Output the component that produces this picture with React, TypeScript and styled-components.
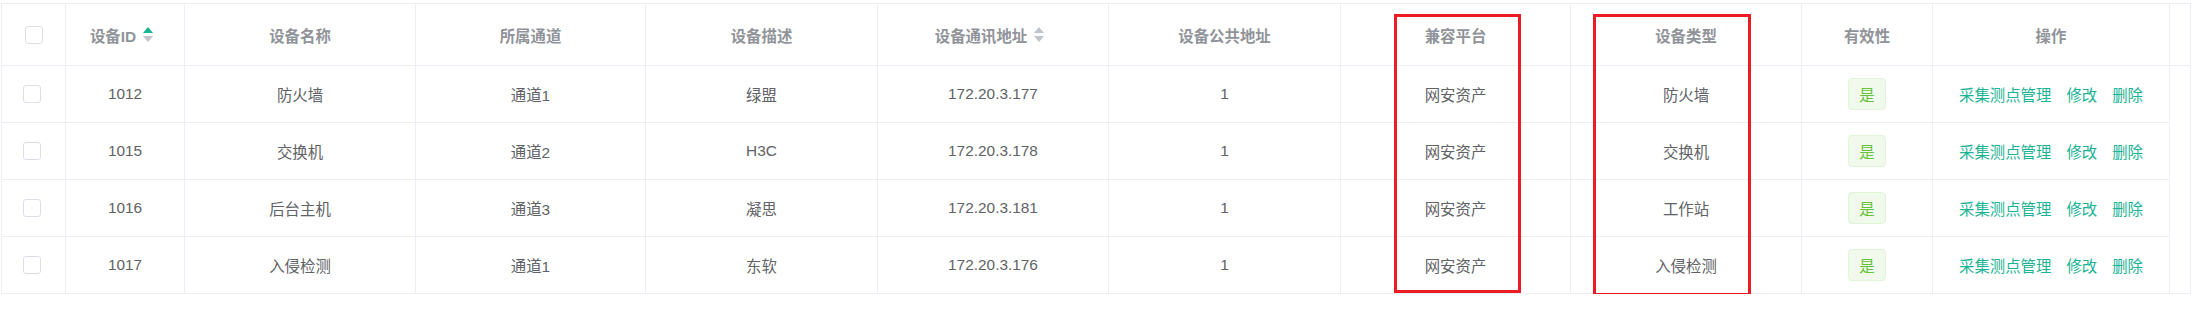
import React from "react";
import styled, { createGlobalStyle, css } from "styled-components";

const GlobalStyle = createGlobalStyle`
  html, body {
    margin: 0;
    padding: 0;
    background: #ffffff;
  }
  body {
    font-family: "Liberation Sans", "Noto Sans CJK SC", sans-serif;
  }
`;

const COLS = "64px 119px 231px 230px 232px 231px 232px 230px 231px 131px 237px 20px";
const BORDER = "#ebeef5";
const TEAL = "#1ab394";

const Page = styled.div`
  position: relative;
  padding: 3px 0 0 1px;
`;

const Table = styled.div`
  width: max-content;
  border-top: 1px solid ${BORDER};
  border-left: 1px solid ${BORDER};
  border-right: 1px solid ${BORDER};
  font-size: 15.4px;
`;

const Row = styled.div`
  display: grid;
  grid-template-columns: ${COLS};
`;

const Cell = styled.div<{ $head?: boolean; $gutter?: boolean; $last?: boolean; $nudge?: number }>`
  box-sizing: border-box;
  height: ${(p) => (p.$head ? "62px" : "57px")};
  display: flex;
  align-items: center;
  justify-content: center;
  white-space: nowrap;
  border-right: 1px solid ${BORDER};
  border-bottom: 1px solid ${BORDER};
  color: ${(p) => (p.$head ? "#909399" : "#606266")};
  font-weight: ${(p) => (p.$head ? 700 : 400)};
  padding-right: ${(p) => (p.$nudge ? `${p.$nudge}px` : "0")};
  ${(p) =>
    p.$gutter &&
    css`
      border-right: none;
      border-bottom: ${p.$head || p.$last ? `1px solid ${BORDER}` : "none"};
    `}
`;

const Checkbox = styled.span`
  box-sizing: border-box;
  display: inline-block;
  width: 18px;
  height: 18px;
  border: 1px solid #dcdfe6;
  border-radius: 3px;
  background: #fff;
`;

const SortCaret = styled.span`
  display: inline-flex;
  flex-direction: column;
  align-items: center;
  justify-content: center;
  gap: 3px;
  width: 24px;
  height: 30px;
`;

const Triangle = styled.span<{ $dir: "up" | "down"; $active?: boolean }>`
  width: 0;
  height: 0;
  border-left: 5.5px solid transparent;
  border-right: 5.5px solid transparent;
  ${(p) =>
    p.$dir === "up"
      ? css`
          border-bottom: 6px solid ${p.$active ? TEAL : "#c0c4cc"};
        `
      : css`
          border-top: 6px solid ${p.$active ? TEAL : "#c0c4cc"};
        `}
`;

const HeadLabel = styled.span`
  display: inline-flex;
  align-items: center;
`;

const Tag = styled.span`
  box-sizing: border-box;
  display: inline-flex;
  align-items: center;
  justify-content: center;
  height: 32px;
  padding: 0 10px;
  background: #f0f9eb;
  border: 1px solid #e1f3d8;
  border-radius: 4px;
  color: #67c23a;
  font-size: 15.4px;
`;

const Actions = styled.span`
  display: inline-flex;
  gap: 15px;
`;

const ActionLink = styled.a`
  color: ${TEAL};
  text-decoration: none;
  cursor: pointer;
`;

const Highlight = styled.div<{ $left: number; $top: number; $w: number; $h: number }>`
  position: absolute;
  box-sizing: border-box;
  left: ${(p) => p.$left}px;
  top: ${(p) => p.$top}px;
  width: ${(p) => p.$w}px;
  height: ${(p) => p.$h}px;
  border: 3px solid #ec1c24;
  pointer-events: none;
`;

type Device = {
  id: string;
  name: string;
  channel: string;
  desc: string;
  addr: string;
  pub: string;
  platform: string;
  type: string;
};

const devices: Device[] = [
  { id: "1012", name: "防火墙", channel: "通道1", desc: "绿盟", addr: "172.20.3.177", pub: "1", platform: "网安资产", type: "防火墙" },
  { id: "1015", name: "交换机", channel: "通道2", desc: "H3C", addr: "172.20.3.178", pub: "1", platform: "网安资产", type: "交换机" },
  { id: "1016", name: "后台主机", channel: "通道3", desc: "凝思", addr: "172.20.3.181", pub: "1", platform: "网安资产", type: "工作站" },
  { id: "1017", name: "入侵检测", channel: "通道1", desc: "东软", addr: "172.20.3.176", pub: "1", platform: "网安资产", type: "入侵检测" },
];

const Sortable: React.FC<{ label: string; active?: boolean }> = ({ label, active }) => (
  <HeadLabel>
    {label}
    <SortCaret>
      <Triangle $dir="up" $active={active} />
      <Triangle $dir="down" />
    </SortCaret>
  </HeadLabel>
);

export default function App() {
  return (
    <>
      <GlobalStyle />
      <Page>
        <Table>
          <Row>
            <Cell $head>
              <Checkbox />
            </Cell>
            <Cell $head>
              <Sortable label="设备ID" active />
            </Cell>
            <Cell $head>设备名称</Cell>
            <Cell $head>所属通道</Cell>
            <Cell $head>设备描述</Cell>
            <Cell $head>
              <Sortable label="设备通讯地址" />
            </Cell>
            <Cell $head>设备公共地址</Cell>
            <Cell $head>兼容平台</Cell>
            <Cell $head>设备类型</Cell>
            <Cell $head>有效性</Cell>
            <Cell $head>操作</Cell>
            <Cell $head $gutter />
          </Row>
          {devices.map((d, i) => {
            const last = i === devices.length - 1;
            return (
              <Row key={d.id}>
                <Cell $nudge={4}>
                  <Checkbox />
                </Cell>
                <Cell>{d.id}</Cell>
                <Cell>{d.name}</Cell>
                <Cell>{d.channel}</Cell>
                <Cell>{d.desc}</Cell>
                <Cell>{d.addr}</Cell>
                <Cell>{d.pub}</Cell>
                <Cell>{d.platform}</Cell>
                <Cell>{d.type}</Cell>
                <Cell>
                  <Tag>是</Tag>
                </Cell>
                <Cell>
                  <Actions>
                    <ActionLink>采集测点管理</ActionLink>
                    <ActionLink>修改</ActionLink>
                    <ActionLink>删除</ActionLink>
                  </Actions>
                </Cell>
                <Cell $gutter $last={last} />
              </Row>
            );
          })}
        </Table>
        <Highlight $left={1394} $top={14} $w={127} $h={279} />
        <Highlight $left={1593} $top={14} $w={158} $h={282} />
      </Page>
    </>
  );
}
